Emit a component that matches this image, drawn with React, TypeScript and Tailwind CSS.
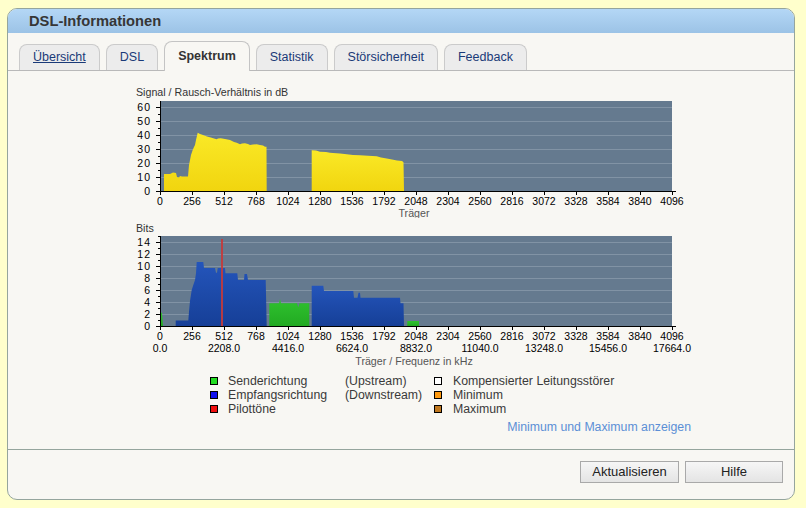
import React from 'react';

type Tab = { label: string; link?: boolean; active?: boolean };

const TABS: Tab[] = [
  { label: 'Übersicht', link: true },
  { label: 'DSL' },
  { label: 'Spektrum', active: true },
  { label: 'Statistik' },
  { label: 'Störsicherheit' },
  { label: 'Feedback' },
];

const CARRIERS = [0, 256, 512, 768, 1024, 1280, 1536, 1792, 2048, 2304, 2560, 2816, 3072, 3328, 3584, 3840, 4096];
const FREQS = ['0.0', '2208.0', '4416.0', '6624.0', '8832.0', '11040.0', '13248.0', '15456.0', '17664.0'];

// plot area in page pixels: x 160..672 (8 carriers per px)
const PX0 = 160;
const PX1 = 672;
const cx = (c: number) => PX0 + c / 8;

const SNR_A =
  '164,191 164,174 170,174 173,172.5 176,173 177,177 179,177.5 180,176 182,176.5 188,176.5 189,165 190,160 191,155 192.7,150 194,147 195,145 196,140 197.7,132.7 200,134 203,135 207,136.5 211.7,137.7 214,138.5 216.7,139.3 218,138.5 220.7,138.3 225,139 230,140 234,142 236.7,142.7 240,144.3 242,143.5 245,143.3 248,144 250,145 253,144.5 256.7,144.3 260,145 263,145.5 265,146.7 266.5,146.7 266.7,191';
const SNR_B =
  '311.7,191 311.7,150.3 316,150.5 320,151.7 326,152 330,152.7 333,153 340,153.5 346.7,154.3 353,155 360,155.3 368,155.8 376.7,156.3 381,157.5 386.7,158.5 392,159.5 397,160.5 402,161 403.5,162.3 404,191';

const BITS_DOWN_A =
  '175.7,326 175.7,320.5 188.3,320.5 189,311.7 190,301 191.7,290 193.3,285 195,280 196,273.3 196.7,262 203.3,262 204,268 215,268 216,272.7 217,272.7 217.7,268 225,268 225.5,273.3 237.3,273.3 238,280 244,280 244.5,274 247,274 248,280 265.7,280 266.7,326';
const BITS_DOWN_B =
  '311.7,326 311.7,285.7 323.3,285.7 324,291 353.3,291 354,297.7 357.5,297.7 358.5,292.7 360,292.7 360.5,297.7 400,297.7 400.5,303.3 403.5,303.3 404,326';
const BITS_UP_A = '160,326 160,312 162,313 163,326';
const BITS_UP_B =
  '269.3,326 269.3,303.3 279,303.3 280,299 281,303.3 297,303.3 298.3,307.3 299.5,303.3 309.3,303.3 309.3,326';
const BITS_UP_C = '407.3,326 407.3,321 419,321 419,326';

function YAxis({ top, bottom, step, major, labels }: { top: number; bottom: number; step: number; major: number; labels: string[] }) {
  const ticks: React.ReactNode[] = [];
  let i = 0;
  for (let y = bottom; y >= top; y -= step, i++) {
    const isMajor = i % major === 0;
    ticks.push(<line key={`t${i}`} x1={isMajor ? 156 : 158} x2={160} y1={y + 0.5} y2={y + 0.5} stroke="#000" />);
    if (isMajor) {
      const label = labels[i / major];
      if (label !== undefined)
        ticks.push(
          <text key={`l${i}`} x={151} y={y + 4} textAnchor="end" fontSize={10.5} letterSpacing={1} fill="#000">
            {label}
          </text>,
        );
    }
  }
  return (
    <g>
      <line x1={160.5} x2={160.5} y1={top} y2={bottom + 1} stroke="#000" />
      {ticks}
    </g>
  );
}

function XAxis({ y }: { y: number }) {
  return (
    <g>
      <line x1={157} x2={676} y1={y + 0.5} y2={y + 0.5} stroke="#000" />
      {CARRIERS.map((c) => (
        <line key={c} x1={cx(c) + 0.5} x2={cx(c) + 0.5} y1={y} y2={y + 4} stroke="#000" />
      ))}
      {CARRIERS.map((c) => (
        <text key={`l${c}`} x={cx(c)} y={y + 13.5} textAnchor="middle" fontSize={10.5} fill="#000">
          {c}
        </text>
      ))}
    </g>
  );
}

function SnrChart() {
  const grid = [1, 2, 3, 4, 5, 6].map((k) => 191 - 14 * k);
  return (
    <svg viewBox="130 86 570 132" width={570} height={132} className="block">
      <defs>
        <linearGradient id="snrFill" x1="0" y1="0" x2="0" y2="1">
          <stop offset="0" stopColor="#fae927" />
          <stop offset="1" stopColor="#f1d50f" />
        </linearGradient>
      </defs>
      <text x={136} y={96} fontSize={10.67} fill="#333">
        Signal / Rausch-Verhältnis in dB
      </text>
      <rect x={PX0} y={101} width={PX1 - PX0} height={90} fill="#657a8f" />
      {grid.map((y) => (
        <line key={y} x1={PX0} x2={PX1} y1={y + 0.5} y2={y + 0.5} stroke="#8193a5" />
      ))}
      <polygon points={SNR_A} fill="url(#snrFill)" />
      <polygon points={SNR_B} fill="url(#snrFill)" />
      <YAxis top={101} bottom={191} step={7} major={2} labels={['0', '10', '20', '30', '40', '50', '60']} />
      <XAxis y={191} />
      <text x={414} y={217} textAnchor="middle" fontSize={10.67} fill="#555">
        Träger
      </text>
    </svg>
  );
}

function BitsChart() {
  const grid = [1, 2, 3, 4, 5, 6, 7].map((k) => 326 - 12 * k);
  return (
    <svg viewBox="130 222 570 146" width={570} height={146} className="block">
      <defs>
        <linearGradient id="downFill" x1="0" y1="0" x2="0" y2="1">
          <stop offset="0" stopColor="#2455bb" />
          <stop offset="1" stopColor="#163f97" />
        </linearGradient>
        <linearGradient id="upFill" x1="0" y1="0" x2="0" y2="1">
          <stop offset="0" stopColor="#2fc22f" />
          <stop offset="1" stopColor="#22aa22" />
        </linearGradient>
      </defs>
      <text x={136} y={231.5} fontSize={10.67} fill="#333">
        Bits
      </text>
      <rect x={PX0} y={236} width={PX1 - PX0} height={90} fill="#657a8f" />
      {grid.map((y) => (
        <line key={y} x1={PX0} x2={PX1} y1={y + 0.5} y2={y + 0.5} stroke="#8193a5" />
      ))}
      <polygon points={BITS_UP_A} fill="url(#upFill)" />
      <polygon points={BITS_UP_B} fill="url(#upFill)" />
      <polygon points={BITS_UP_C} fill="url(#upFill)" />
      <polygon points={BITS_DOWN_A} fill="url(#downFill)" />
      <polygon points={BITS_DOWN_B} fill="url(#downFill)" />
      <rect x={221} y={239} width={2} height={87} fill="#c43a3a" opacity={0.9} />
      <YAxis top={236} bottom={326} step={6} major={2} labels={['0', '2', '4', '6', '8', '10', '12', '14']} />
      <XAxis y={326} />
      {FREQS.map((f, i) => (
        <text key={f} x={PX0 + 64 * i} y={351.5} textAnchor="middle" fontSize={10.5} fill="#000">
          {f}
        </text>
      ))}
      <text x={414} y={365} textAnchor="middle" fontSize={10.67} fill="#555">
        Träger / Frequenz in kHz
      </text>
    </svg>
  );
}

const Swatch = ({ color }: { color: string }) => (
  <span className={`block h-2 w-2 border border-black ${color}`} />
);

const LEGEND = [
  { c1: 'bg-[#22dd22]', l1: 'Senderichtung', p: '(Upstream)', c2: 'bg-white', l2: 'Kompensierter Leitungsstörer' },
  { c1: 'bg-[#1010f0]', l1: 'Empfangsrichtung', p: '(Downstream)', c2: 'bg-[#ff9a10]', l2: 'Minimum' },
  { c1: 'bg-[#f01010]', l1: 'Pilottöne', p: '', c2: 'bg-[#c07820]', l2: 'Maximum' },
];

function Legend() {
  return (
    <div className="ml-[202px] mt-[6px] grid grid-cols-[18px_117px_89px_19px_auto] text-[12.3px] leading-[14px] text-[#3a3a3a]">
      {LEGEND.map((r) => (
        <React.Fragment key={r.l1}>
          <div className="flex items-center">
            <Swatch color={r.c1} />
          </div>
          <div>{r.l1}</div>
          <div>{r.p}</div>
          <div className="flex items-center">
            <Swatch color={r.c2} />
          </div>
          <div>{r.l2}</div>
        </React.Fragment>
      ))}
    </div>
  );
}

export default function App() {
  return (
    <div className="h-[508px] w-full bg-[#ffffcc] pl-[7px] pt-2 font-['Liberation_Sans',Arial,sans-serif]">
      <div className="flex h-[492px] w-[788px] flex-col overflow-hidden rounded-[10px] border border-[#95a59d] bg-[#f8f7f3]">
        <div className="flex h-6 shrink-0 items-center bg-gradient-to-b from-[#b4d7f6] to-[#9cc3e6] pl-[21px] text-[14.7px] font-bold text-[#363636]">
          DSL-Informationen
        </div>

        <div className="flex h-[38px] shrink-0 items-end gap-[6px] border-b border-[#b9b9b9] pl-[11px] pt-2">
          {TABS.map((t) =>
            t.active ? (
              <div
                key={t.label}
                className="relative -mb-px flex h-[30px] items-center rounded-t-[8px] border border-b-0 border-[#c4c4c4] bg-[#f8f7f3] px-[13px] text-[12.5px] font-bold text-[#333]"
              >
                {t.label}
              </div>
            ) : (
              <div
                key={t.label}
                className={`flex h-[26px] items-center rounded-t-[8px] border border-b-0 border-[#cbcbcb] bg-[#ececec] px-[13px] text-[12.5px] text-[#1a3a78] ${t.link ? 'underline' : ''}`}
              >
                {t.label}
              </div>
            ),
          )}
        </div>

        <div className="flex flex-1 flex-col">
          <div className="ml-[122px] mt-[15px]">
            <SnrChart />
          </div>
          <div className="ml-[122px] mt-[4px]">
            <BitsChart />
          </div>
          <Legend />
          <div className="mr-[103px] mt-[4px] text-right text-[12.3px] leading-[14px] text-[#5b8fd6]">
            Minimum und Maximum anzeigen
          </div>
        </div>

        <div className="flex h-[50px] shrink-0 justify-end gap-[6px] border-t border-[#95a59d] pr-[11px] pt-[11px]">
          <button className="h-[22px] w-[99px] border border-[#a9a9a9] bg-gradient-to-b from-[#f6f6f6] to-[#e4e4e4] text-[13px] text-[#222]">
            Aktualisieren
          </button>
          <button className="h-[22px] w-[98px] border border-[#a9a9a9] bg-gradient-to-b from-[#f6f6f6] to-[#e4e4e4] text-[13px] text-[#222]">
            Hilfe
          </button>
        </div>
      </div>
    </div>
  );
}
